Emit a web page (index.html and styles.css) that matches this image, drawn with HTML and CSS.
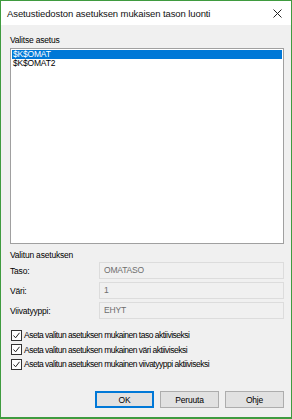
FILE: index.html
```html
<!DOCTYPE html>
<html lang="fi">
<head>
    <meta charset="UTF-8">
    <title>Asetustiedoston asetuksen mukaisen tason luonti</title>
    <link rel="stylesheet" href="styles.css">
</head>
<body>
    <div class="window">
        <div class="titlebar">
            <span class="title">Asetustiedoston asetuksen mukaisen tason luonti</span>
            <svg class="close" width="9" height="9" viewBox="0 0 9 9">
                <path d="M0.5 0.5 L8.5 8.5 M8.5 0.5 L0.5 8.5" stroke="#222" stroke-width="1"/>
            </svg>
        </div>
        <div class="content">
            <div class="label">Valitse asetus</div>
            <div class="listbox">
                <div class="item selected">$K$OMAT</div>
                <div class="item">$K$OMAT2</div>
            </div>

            <div class="label group">Valitun asetuksen</div>
            <div class="field">
                <span class="field-label">Taso:</span>
                <div class="input">OMATASO</div>
            </div>
            <div class="field">
                <span class="field-label">Väri:</span>
                <div class="input">1</div>
            </div>
            <div class="field">
                <span class="field-label">Viivatyyppi:</span>
                <div class="input">EHYT</div>
            </div>

            <div class="checks">
                <label class="check"><span class="box"><svg width="7" height="7" viewBox="0 0 7 7"><path d="M0.5 3.5 L2.6 5.8 L6.5 0.8" fill="none" stroke="#222" stroke-width="1"/></svg></span>Aseta valitun asetuksen mukainen taso aktiiviseksi</label>
                <label class="check"><span class="box"><svg width="7" height="7" viewBox="0 0 7 7"><path d="M0.5 3.5 L2.6 5.8 L6.5 0.8" fill="none" stroke="#222" stroke-width="1"/></svg></span>Aseta valitun asetuksen mukainen väri aktiiviseksi</label>
                <label class="check"><span class="box"><svg width="7" height="7" viewBox="0 0 7 7"><path d="M0.5 3.5 L2.6 5.8 L6.5 0.8" fill="none" stroke="#222" stroke-width="1"/></svg></span>Aseta valitun asetuksen mukainen viivatyyppi aktiiviseksi</label>
            </div>

            <div class="buttons">
                <button class="default">OK</button>
                <button>Peruuta</button>
                <button>Ohje</button>
            </div>
        </div>
    </div>
</body>
</html>
```

FILE: styles.css
```css
body {
    margin: 0;
    font-family: "Liberation Sans", Arial, sans-serif;
    font-size: 8.5px;
    letter-spacing: -0.2px;
    color: #000;
}
.window {
    width: 292px;
    height: 419px;
    box-sizing: border-box;
    border: 1px solid #3f9b3f;
    border-bottom-width: 2px;
    background-color: #f0f0f0;
    display: flex;
    flex-direction: column;
}
.titlebar {
    height: 24px;
    flex-shrink: 0;
    background-color: #fff;
    display: flex;
    align-items: center;
    justify-content: space-between;
    padding: 0 9px 0 6px;
    font-size: 9.5px;
    letter-spacing: -0.1px;
    color: #111;
}
.content {
    flex: 1;
    padding: 10px 7px 8px 9px;
    display: flex;
    flex-direction: column;
}
.label {
    height: 10px;
    line-height: 10px;
    margin-bottom: 3px;
}
.listbox {
    height: 196px;
    flex-shrink: 0;
    background-color: #fff;
    border: 1px solid #a0a0a0;
    padding: 1px;
    box-sizing: border-box;
}
.item {
    height: 9px;
    line-height: 9px;
    padding-left: 1px;
}
.item.selected {
    background-color: #0078d7;
    color: #fff;
}
.group {
    margin-top: 6px;
    margin-bottom: 2px;
}
.field {
    display: flex;
    align-items: center;
    height: 17px;
    margin-bottom: 3px;
}
.field-label {
    width: 89px;
}
.input {
    flex: 1;
    height: 17px;
    box-sizing: border-box;
    border: 1px solid #dcdcdc;
    line-height: 15px;
    padding-left: 4px;
    color: #6d6d6d;
}
.checks {
    margin-top: 7px;
    display: flex;
    flex-direction: column;
    gap: 2px;
    letter-spacing: -0.5px;
}
.check {
    display: flex;
    align-items: center;
    height: 12.5px;
}
.box {
    width: 9px;
    height: 9px;
    border: 1px solid #333;
    background-color: #fff;
    margin-left: 1px;
    margin-right: 2px;
    display: flex;
    align-items: center;
    justify-content: center;
}
.buttons {
    margin-top: auto;
    display: flex;
    justify-content: flex-end;
    gap: 6px;
    margin-bottom: 1px;
}
button {
    width: 59px;
    height: 17px;
    font-family: inherit;
    font-size: 8.5px;
    letter-spacing: -0.2px;
    color: #000;
    background-color: #e1e1e1;
    border: 1px solid #adadad;
    padding: 0;
}
button.default {
    border: 2px solid #0078d7;
}
```
